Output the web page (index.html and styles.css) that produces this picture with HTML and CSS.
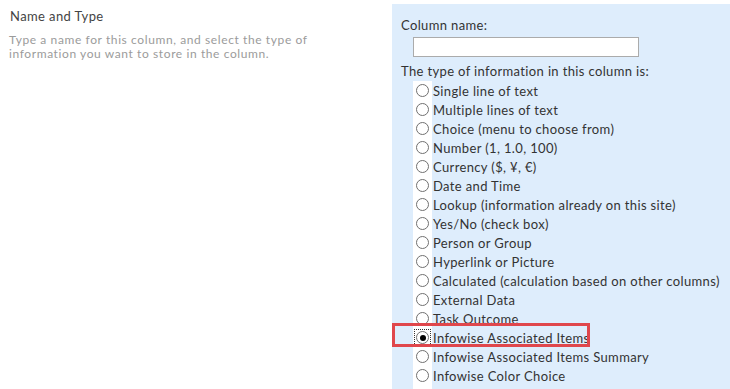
FILE: index.html
```html
<!DOCTYPE html>
<html>
<head>
<meta charset="utf-8">
<link rel="stylesheet" href="styles.css">
</head>
<body>
<div class="page">
  <div class="section-info">
    <div class="section-title">Name and Type</div>
    <div class="section-desc">Type a name for this column, and select the type of information you want to store in the column.</div>
  </div>
  <div class="panel">
    <div class="label">Column name:</div>
    <div class="input-row"><input class="text-input" type="text"></div>
    <div class="label label-type">The type of information in this column is:</div>
    <div class="options">
      <div class="opt"><span class="radio-cell"><span class="radio"></span></span><span class="opt-text">Single line of text</span></div>
      <div class="opt"><span class="radio-cell"><span class="radio"></span></span><span class="opt-text">Multiple lines of text</span></div>
      <div class="opt"><span class="radio-cell"><span class="radio"></span></span><span class="opt-text">Choice (menu to choose from)</span></div>
      <div class="opt"><span class="radio-cell"><span class="radio"></span></span><span class="opt-text">Number (1, 1.0, 100)</span></div>
      <div class="opt"><span class="radio-cell"><span class="radio"></span></span><span class="opt-text">Currency ($, ¥, €)</span></div>
      <div class="opt"><span class="radio-cell"><span class="radio"></span></span><span class="opt-text">Date and Time</span></div>
      <div class="opt"><span class="radio-cell"><span class="radio"></span></span><span class="opt-text">Lookup (information already on this site)</span></div>
      <div class="opt"><span class="radio-cell"><span class="radio"></span></span><span class="opt-text">Yes/No (check box)</span></div>
      <div class="opt"><span class="radio-cell"><span class="radio"></span></span><span class="opt-text">Person or Group</span></div>
      <div class="opt"><span class="radio-cell"><span class="radio"></span></span><span class="opt-text">Hyperlink or Picture</span></div>
      <div class="opt"><span class="radio-cell"><span class="radio"></span></span><span class="opt-text">Calculated (calculation based on other columns)</span></div>
      <div class="opt"><span class="radio-cell"><span class="radio"></span></span><span class="opt-text">External Data</span></div>
      <div class="opt"><span class="radio-cell"><span class="radio"></span></span><span class="opt-text">Task Outcome</span></div>
      <div class="opt opt-selected"><span class="radio-cell focused"><span class="radio checked"></span></span><span class="opt-text">Infowise Associated Items</span><span class="highlight"></span></div>
      <div class="opt"><span class="radio-cell"><span class="radio"></span></span><span class="opt-text">Infowise Associated Items Summary</span></div>
      <div class="opt"><span class="radio-cell"><span class="radio"></span></span><span class="opt-text">Infowise Color Choice</span></div>
      <div class="opt"><span class="radio-cell"></span><span class="opt-text"></span></div>
    </div>
  </div>
</div>
</body>
</html>
```

FILE: styles.css
```css
html, body {
  margin: 0;
  padding: 0;
  background: #ffffff;
  overflow: hidden;
}
body {
  font-family: "Lato", "Open Sans", sans-serif;
  color: #333333;
  width: 730px;
  height: 389px;
}
.page {
  display: flex;
  align-items: flex-start;
  height: 389px;
}
.section-info {
  width: 392px;
  flex: none;
  padding: 8px 0 0 9px;
  box-sizing: border-box;
}
.section-title {
  font-size: 13px;
  line-height: 16px;
  color: #444444;
  padding-left: 1px;
  letter-spacing: 0.4px;
}
.section-desc {
  margin-top: 9px;
  font-size: 12px;
  line-height: 14px;
  color: #9b9b9b;
  width: 330px;
  letter-spacing: 0.6px;
}
.panel {
  flex: 1;
  margin-top: 4px;
  height: 385px;
  background: #deedfc;
  padding: 13px 0 0 9px;
  box-sizing: border-box;
  font-size: 13px;
  letter-spacing: 0.36px;
}
.label {
  line-height: 16px;
  color: #333333;
}
.input-row {
  padding: 4px 0 0 12px;
  height: 20px;
}
.text-input {
  display: block;
  width: 226px;
  height: 20px;
  box-sizing: border-box;
  border: 1px solid #ababab;
  background: #ffffff;
  margin: 0;
  padding: 0;
}
.label-type {
  margin-top: 6px;
}
.options {
  margin-top: 2px;
}
.opt {
  position: relative;
  display: flex;
  align-items: center;
  height: 19px;
}
.radio-cell {
  margin-left: 12px;
  width: 19px;
  height: 19px;
  background: #ffffff;
  display: flex;
  align-items: center;
  justify-content: center;
  box-sizing: border-box;
  flex: none;
}
.radio {
  width: 13px;
  height: 13px;
  border: 1px solid #707070;
  border-radius: 50%;
  box-sizing: border-box;
  background: #ffffff;
  display: flex;
  align-items: center;
  justify-content: center;
}
.radio.checked::after {
  content: "";
  width: 6px;
  height: 6px;
  border-radius: 50%;
  background: #000000;
}
.radio-cell.focused {
  outline: 1px dotted #333333;
  outline-offset: -2px;
}
.opt-text {
  margin-left: 1px;
  white-space: nowrap;
  color: #333333;
}
.highlight {
  position: absolute;
  left: -9px;
  top: -5px;
  width: 198px;
  height: 24px;
  border: 3px solid #e0474c;
  box-sizing: border-box;
  pointer-events: none;
}
```
